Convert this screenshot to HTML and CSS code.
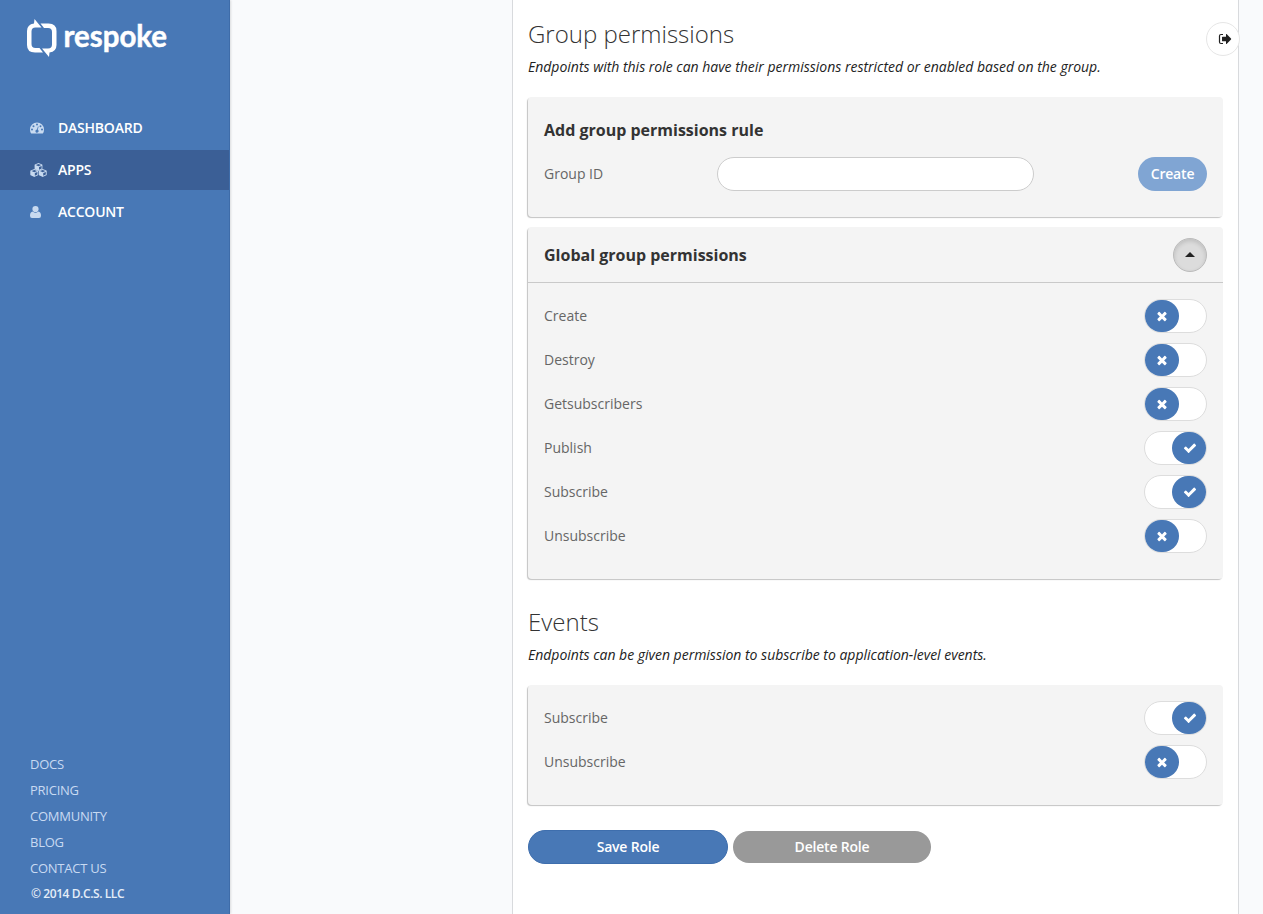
FILE: index.html
```
<!DOCTYPE html>
<html lang="en">
<head>
<meta charset="utf-8">
<title>Respoke</title>
<link rel="stylesheet" href="styles.css">
</head>
<body>
<svg class="defs" aria-hidden="true">
  <symbol id="times" viewBox="0 0 1792 1792"><path d="M1490 1322q0 40-28 68l-136 136q-28 28-68 28t-68-28l-294-294-294 294q-28 28-68 28t-68-28l-136-136q-28-28-28-68t28-68l294-294-294-294q-28-28-28-68t28-68l136-136q28-28 68-28t68 28l294 294 294-294q28-28 68-28t68 28l136 136q28 28 28 68t-28 68l-294 294 294 294q28 28 28 68z"/></symbol>
  <symbol id="check" viewBox="0 0 1792 1792"><path d="M1671 566q0 40-28 68l-724 724-136 136q-28 28-68 28t-68-28l-136-136-362-362q-28-28-28-68t28-68l136-136q28-28 68-28t68 28l294 295 656-657q28-28 68-28t68 28l136 136q28 28 28 68z"/></symbol>
  <symbol id="cube" viewBox="0 0 9 9"><path fill-rule="evenodd" d="M4.5 0 8.6 1.6Q9 1.8 9 2.3V6.3Q9 6.8 8.6 7L4.9 8.8Q4.5 9 4.1 8.8L.4 7Q0 6.8 0 6.3V2.3Q0 1.8.4 1.6ZM4.5 1.1 1.4 2.3 4.5 3.6 7.6 2.3ZM5.1 4.6V7.5L8 6.1V3.4Z"/></symbol>
  <path id="half" d="M9.500 3 16.500 11.500H10.500Q6.500 11.500 6.500 15.500V28Q6.500 32 10.500 32H14.500L18 36.500H10Q2 36.500 2 29V15Q2 8.500 9 7.500Z"/>
</svg>
<div class="app">
  <aside class="sidebar">
    <svg class="logo" viewBox="0 0 150 44" role="img" aria-label="respoke">
      <use href="#half"/>
      <use href="#half" transform="rotate(180 16.750 22)"/>
      <text x="38.500" y="31" textLength="103.500" lengthAdjust="spacingAndGlyphs">respoke</text>
    </svg>
    <nav class="nav">
      <a class="nav-item"><svg class="ico" viewBox="0 0 14 12"><path fill-rule="evenodd" d="M7 .5A7 7 0 0 0 0 7.500Q0 9.700 1 11.200Q1.200 11.500 1.600 11.500H12.400Q12.800 11.500 13 11.200Q14 9.700 14 7.500A7 7 0 0 0 7 .5ZM2 6.500A1 1 0 1 1 2 8.500A1 1 0 1 1 2 6.500ZM3.500 3.200A1 1 0 1 1 3.500 5.200A1 1 0 1 1 3.500 3.200ZM7 1.500A1 1 0 1 1 7 3.500A1 1 0 1 1 7 1.500ZM10.500 3.200A1 1 0 1 1 10.500 5.200A1 1 0 1 1 10.500 3.200ZM12 6.500A1 1 0 1 1 12 8.500A1 1 0 1 1 12 6.500ZM8.600 4.600 7.800 7.700A1.600 1.600 0 1 1 7 7.500L7.900 4.400Z"/></svg><span>DASHBOARD</span></a>
      <a class="nav-item active"><svg class="ico cubes" viewBox="0 0 17 14"><use href="#cube" x="4.200" width="8.600" height="8"/><use href="#cube" y="6" width="8.600" height="8"/><use href="#cube" x="8.400" y="6" width="8.600" height="8"/></svg><span>APPS</span></a>
      <a class="nav-item"><svg class="ico" viewBox="0 0 14 14"><circle cx="5.500" cy="4" r="3.100"/><path d="M2.800 6.500Q5.500 9 8.200 6.500Q11 6.800 11 10.800Q11 13 9 13H2Q0 13 0 10.800Q0 6.800 2.800 6.500Z"/></svg><span>ACCOUNT</span></a>
    </nav>
    <div class="links">
      <a>DOCS</a><a>PRICING</a><a>COMMUNITY</a><a>BLOG</a><a>CONTACT US</a>
      <small>© 2014 D.C.S. LLC</small>
    </div>
  </aside>
  <main class="content">
    <button class="logout" aria-label="Log out"><svg viewBox="0 0 14 12"><path class="door" d="M5 1.500H3Q1.500 1.500 1.500 3V9Q1.500 10.500 3 10.500H5"/><path d="M4.500 3.800H8V1.300Q8 .6 8.600 1.100L13 5.500Q13.400 6 13 6.500L8.600 10.900Q8 11.400 8 10.700V8.200H4.500Q4 8.200 4 7.700V4.300Q4 3.800 4.500 3.800Z"/></svg></button>
    <section>
      <h2>Group permissions</h2>
      <p class="hint">Endpoints with this role can have their permissions restricted or enabled based on the group.</p>
      <div class="card add">
        <h3>Add group permissions rule</h3>
        <div class="form-row"><label for="gid">Group ID</label><input id="gid" type="text"><button class="btn create">Create</button></div>
      </div>
      <div class="card">
        <div class="card-head"><h3>Global group permissions</h3><button class="collapse" aria-label="Collapse"><span class="caret"></span></button></div>
        <div class="rows">
          <div class="row"><span>Create</span><span class="switch"><i><svg><use href="#times"/></svg></i></span></div>
          <div class="row"><span>Destroy</span><span class="switch"><i><svg><use href="#times"/></svg></i></span></div>
          <div class="row"><span>Getsubscribers</span><span class="switch"><i><svg><use href="#times"/></svg></i></span></div>
          <div class="row"><span>Publish</span><span class="switch on"><i><svg><use href="#check"/></svg></i></span></div>
          <div class="row"><span>Subscribe</span><span class="switch on"><i><svg><use href="#check"/></svg></i></span></div>
          <div class="row"><span>Unsubscribe</span><span class="switch"><i><svg><use href="#times"/></svg></i></span></div>
        </div>
      </div>
    </section>
    <section class="events">
      <h2>Events</h2>
      <p class="hint">Endpoints can be given permission to subscribe to application-level events.</p>
      <div class="card">
        <div class="rows">
          <div class="row"><span>Subscribe</span><span class="switch on"><i><svg><use href="#check"/></svg></i></span></div>
          <div class="row"><span>Unsubscribe</span><span class="switch"><i><svg><use href="#times"/></svg></i></span></div>
        </div>
      </div>
    </section>
    <div class="actions"><button class="btn save">Save Role</button><button class="btn delete">Delete Role</button></div>
  </main>
</div>
</body>
</html>
```
FILE: styles.css
```
* { box-sizing: border-box; }
body { margin: 0; background: #f9fafc; color: #333; font: 14px/20px "Open Sans", "Noto Sans", sans-serif; }
h2, h3, p { margin: 0; }
button { border: 0; padding: 0; font: inherit; }
.defs { position: absolute; width: 0; height: 0; }
.app { display: flex; height: 914px; overflow: hidden; }

.sidebar { display: flex; flex-direction: column; width: 230px; background: #4878b6; border-right: 1px solid #3e6ca9; box-shadow: 1px 0 2px rgba(0, 0, 0, .12); }
.logo { width: 150px; height: 44px; margin: 16px 0 48px 25px; fill: #fff; }
.logo text { font: 700 31px Lato, sans-serif; stroke: #fff; stroke-width: .5; }
.nav { display: flex; flex-direction: column; gap: 2px; }
.nav-item { display: flex; align-items: center; height: 40px; padding-left: 30px; color: #fff; font-weight: 600; letter-spacing: -.22px; }
.nav-item span { margin-left: 14px; }
.nav-item.active { background: #3b5f96; }
.ico { width: 14px; height: 14px; fill: #c8daf0; }
.ico.cubes { width: 17px; height: 14px; margin-right: -3px; }
.links { display: flex; flex-direction: column; margin: auto 0 7px 30px; color: #c8daf2; font-size: 13px; line-height: 26px; font-weight: 500; letter-spacing: -.25px; }
.links small { padding-left: 1px; color: #e4edf8; font-size: 12px; font-weight: 600; letter-spacing: -.42px; }

.content { position: relative; width: 727px; margin-left: 282px; padding: 18px 16px 0 15px; background: #fff; border: solid #d8dadd; border-width: 0 1px; }
.logout { position: absolute; top: 22px; right: -2px; display: grid; place-items: center; width: 34px; height: 34px; padding-left: 3px; border: 1px solid #e6e6e6; border-radius: 50%; background: #fff; }
.logout svg { width: 14px; height: 12px; fill: #222; }
.logout .door { fill: none; stroke: #222; stroke-width: 1.2; }
h2 { color: #333; font-size: 24px; font-weight: 300; line-height: 32px; }
h3 { font-size: 16px; font-weight: 700; line-height: 22px; }
.hint { margin: 7px 0 20px; color: #222; font-style: italic; letter-spacing: -.01px; }
.card { width: 695px; margin-bottom: 10px; background: #f4f4f4; border-radius: 4px; box-shadow: -1px 1px 1px #c4c4c4; }
.card.add { height: 120px; padding: 22px 16px 0; }
.form-row { display: flex; align-items: center; margin-top: 16px; color: #666; }
.form-row label { width: 173px; }
.form-row input { width: 317px; height: 34px; border: 1px solid #ccc; border-radius: 17px; background: #fff; }
.btn { height: 34px; border-radius: 17px; color: #fff; font-weight: 600; letter-spacing: -.2px; }
.create { width: 69px; margin-left: auto; background: #80a5d3; }
.card-head { display: flex; align-items: center; justify-content: space-between; height: 56px; padding: 0 16px; border-bottom: 1px solid #c9c9c9; }
.collapse { display: grid; place-items: center; width: 34px; height: 34px; border: 1px solid #bbb; border-radius: 50%; background: #dcdcdc; box-shadow: inset 0 2px 4px rgba(0, 0, 0, .14); }
.caret { border: solid transparent; border-width: 0 5px 5px; border-bottom-color: #222; }
.rows { display: flex; flex-direction: column; gap: 10px; padding: 16px 16px 26px; color: #666; }
.row { display: flex; align-items: center; justify-content: space-between; }
.switch { display: flex; width: 63px; height: 34px; border: 1px solid #ddd; border-radius: 17px; background: #fff; }
.switch i { display: grid; place-items: center; width: 34px; height: 32px; padding-right: 1px; border-radius: 17px; background: #4878b6; }
.switch.on i { margin-left: auto; padding: 0 0 0 1px; }
.switch svg { width: 14px; height: 14px; fill: #fff; }
.events { margin-top: 27px; }
.actions { display: flex; align-items: center; gap: 5px; margin-top: 25px; }
.save { width: 200px; background: #4878b6; border: 1px solid #3e6ead; }
.delete { width: 198px; height: 32px; background: #999; }
```
